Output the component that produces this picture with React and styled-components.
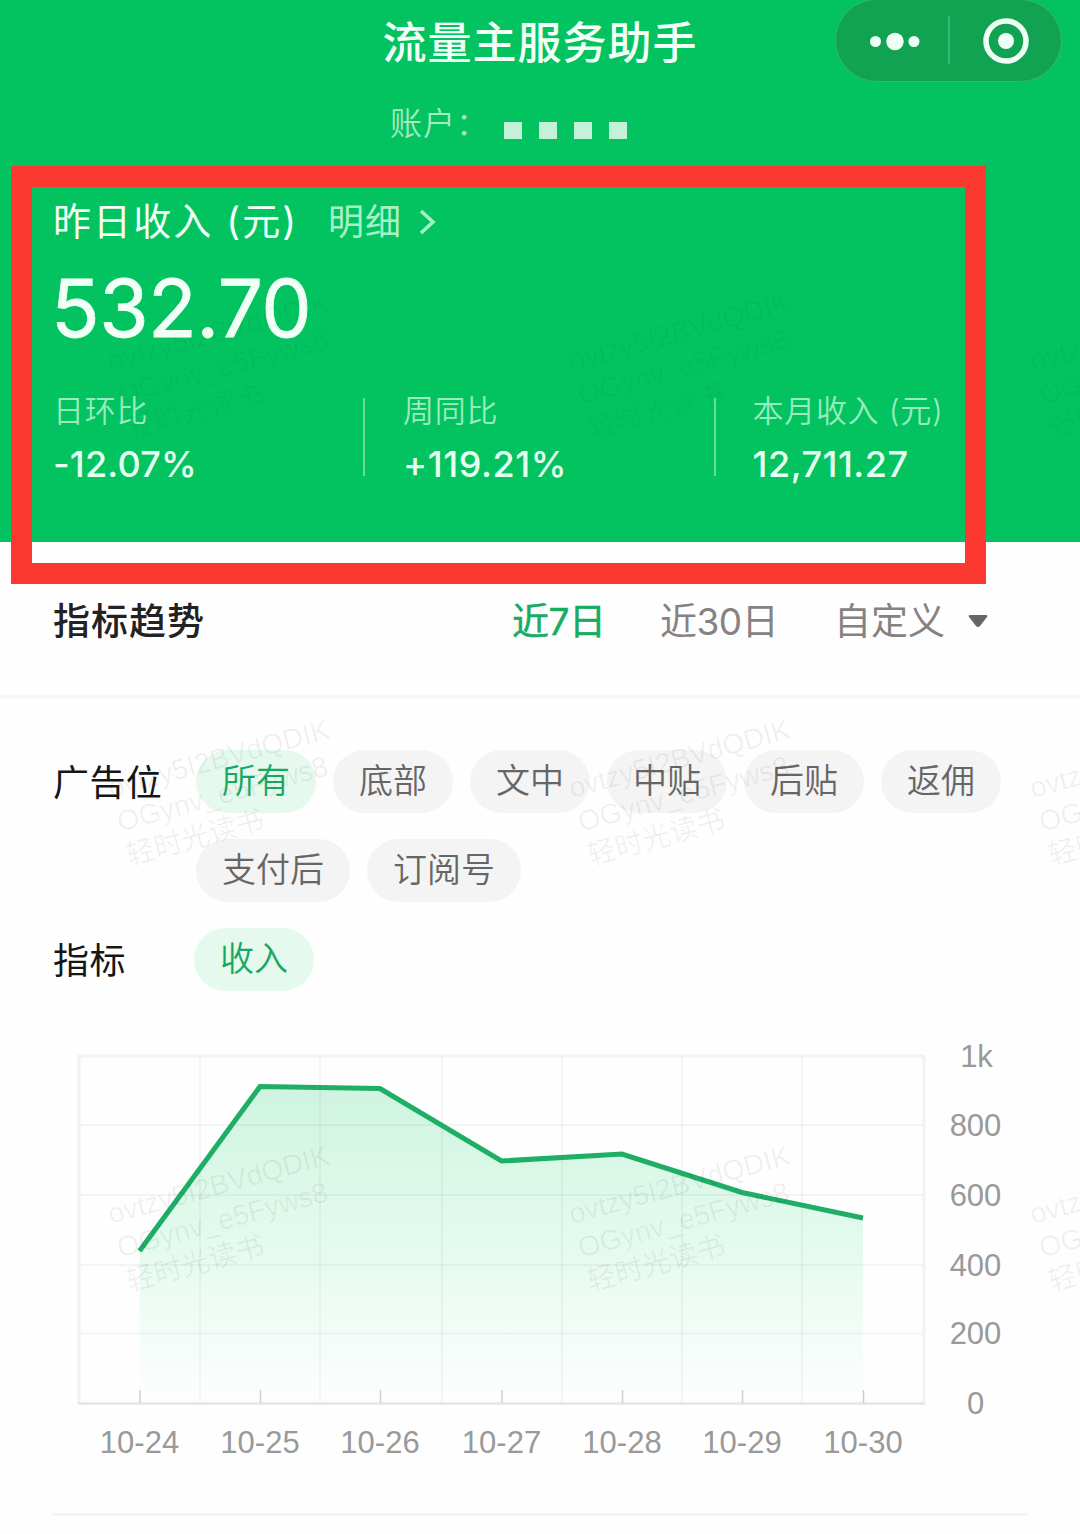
import React from "react";
import styled, { createGlobalStyle } from "styled-components";

const Global = createGlobalStyle`
  * { box-sizing: border-box; }
  body {
    margin: 0;
    background: #fefefe;
    font-family: Inter, "Noto Sans CJK SC", sans-serif;
    white-space: nowrap;
  }
`;

const Page = styled.main`
  position: relative;
  width: 1080px;
  height: 1534px;
  overflow: hidden;
  background: #fefefe;
`;

const Header = styled.header`
  height: 542px;
  background: #02c35f;
  color: #f1fff7;
`;

const TitleBar = styled.div`
  display: grid;
  grid-template-columns: 1fr auto 1fr;
  align-items: center;
  height: 82px;
`;

const Title = styled.h1`
  grid-column: 2;
  margin: 0;
  font-size: 44px;
  line-height: 60px;
  font-weight: 500;
  letter-spacing: 1px;
  padding-top: 4px;
`;

const Capsule = styled.div`
  display: flex;
  align-items: center;
  justify-self: end;
  width: 227px;
  height: 83px;
  margin: -1px 18px 0 0;
  border: 1px solid #35b870;
  border-radius: 42px;
  background: #12a352;
`;

const Account = styled.div`
  display: flex;
  align-items: center;
  height: 84px;
  padding-left: 390px;
`;

const AccountLabel = styled.span`
  width: 114px;
  font-size: 32px;
  line-height: 40px;
  font-weight: 350;
  letter-spacing: 1px;
  color: #a3ebc4;
`;

const Mask = styled.div`
  display: flex;
  gap: 17px;
  padding-top: 13px;
`;

const MaskDot = styled.i`
  width: 18px;
  height: 17px;
  background: #c3f2d8;
`;

const Summary = styled.section`
  display: flex;
  flex-direction: column;
  padding: 31px 0 0 53px;
`;

const Heading = styled.div`
  display: flex;
  align-items: center;
  height: 48px;
  font-size: 38px;
  line-height: 48px;
  font-weight: 400;
  letter-spacing: 2.1px;
`;

const HeadingText = styled.span`
  width: 275px;
`;

const Detail = styled.span`
  display: flex;
  align-items: center;
  gap: 16px;
  padding-top: 2px;
  font-size: 36px;
  font-weight: 400;
  letter-spacing: 1px;
  color: #a5f2c8;
`;

const Amount = styled.div`
  height: 100px;
  margin: 13px 0 0 -2px;
  font-size: 80px;
  line-height: 100px;
  font-weight: 400;
  letter-spacing: -0.5px;
  -webkit-text-stroke: 0.8px currentColor;
`;

const Stats = styled.div`
  display: flex;
  height: 78px;
  margin-top: 40px;
`;

const Stat = styled.div`
  display: flex;
  flex-direction: column;
  gap: 14px;
  width: ${(p) => p.$width}px;
  padding-left: ${(p) => p.$pad || 0}px;
  border-left: ${(p) => (p.$pad ? "2px solid #66dd9c" : "0")};
`;

const StatLabel = styled.span`
  font-size: 31px;
  line-height: 26px;
  font-weight: 350;
  letter-spacing: 0.7px;
  color: #98ecbf;
`;

const StatValue = styled.span`
  font-size: 36px;
  line-height: 52px;
  font-weight: 500;
  letter-spacing: ${(p) => p.$tracking}px;
  color: #e5fff0;
`;

const TrendBar = styled.section`
  display: flex;
  align-items: center;
  height: 156px;
  padding: 6px 0 0 53px;
  border-bottom: 3px solid #f7f7f7;
  font-size: 37px;
  line-height: 50px;
`;

const TrendTitle = styled.h2`
  width: 459px;
  margin: 0;
  font-size: 37px;
  font-weight: 500;
  letter-spacing: 1px;
  color: #222;
`;

const Range = styled.span`
  width: ${(p) => p.$width}px;
  font-weight: 400;
  letter-spacing: ${(p) => p.$tracking || 0}px;
  color: ${(p) => (p.$active ? "#18ab63" : "#868282")};
  -webkit-text-stroke: ${(p) => (p.$active ? "0.5px currentColor" : "0")};
`;

const Filters = styled.section`
  display: flex;
  flex-direction: column;
  gap: 26px;
  padding: 52px 0 0 53px;
`;

const FilterRow = styled.div`
  display: flex;
`;

const FilterLabel = styled.span`
  width: ${(p) => p.$width}px;
  height: 63px;
  font-size: 36px;
  line-height: 66px;
  letter-spacing: 0.4px;
  color: #161616;
`;

const Pills = styled.div`
  display: flex;
  flex-wrap: wrap;
  gap: 26px 17px;
  width: 850px;
`;

const Pill = styled.span`
  width: ${(p) => (p.$wide ? 154 : 120)}px;
  height: 63px;
  border-radius: 32px;
  text-align: center;
  font-size: 34px;
  line-height: 61px;
  font-weight: 350;
  background: ${(p) => (p.$active ? "#e5f9ee" : "#f4f4f4")};
  color: ${(p) => (p.$active ? "#17a862" : "#666")};
`;

const Chart = styled.svg`
  display: block;
  margin-top: 29px;
`;

const AxisText = styled.text`
  font: 31px "Liberation Sans", sans-serif;
  fill: #999;
  text-anchor: middle;
`;

const Rule = styled.hr`
  width: 974px;
  height: 3px;
  margin: 23px 0 0 53px;
  border: 0;
  background: #f5f5f5;
`;

const Highlight = styled.div`
  position: absolute;
  left: 11px;
  top: 166px;
  width: 975px;
  height: 418px;
  border: 21px solid #fb3931;
`;

const Watermark = styled.div`
  position: absolute;
  left: ${(p) => p.$x}px;
  top: ${(p) => p.$y}px;
  transform: rotate(-15.3deg);
  transform-origin: 0 0;
  font: 28.3px/35px "Liberation Sans", "Noto Sans CJK SC", sans-serif;
  color: rgba(0, 0, 0, ${(p) => (p.$faint ? 0.03 : 0.06)});
  pointer-events: none;
`;

const points = [
  ["10-24", 139.5, 1251],
  ["10-25", 260, 1086.5],
  ["10-26", 380, 1088.5],
  ["10-27", 501.5, 1161],
  ["10-28", 622, 1154],
  ["10-29", 742, 1192.5],
  ["10-30", 863, 1218],
];
const line = points.map(([, x, y]) => `${x},${y}`).join(" ");
const columns = [200, 320, 442, 562, 682, 802];
const rows = [
  ["1k", 1056],
  ["800", 1125],
  ["600", 1195],
  ["400", 1265],
  ["200", 1333.5],
  ["0", 1403.5],
];

function TrendChart() {
  return (
    <Chart width="1080" height="470" viewBox="0 1020 1080 470">
      <defs>
        <linearGradient id="area" x1="0" y1="0" x2="0" y2="1">
          <stop offset="0" stopColor="#14c969" stopOpacity="0.2" />
          <stop offset="0.5" stopColor="#1ade78" stopOpacity="0.115" />
          <stop offset="1" stopColor="#1ade78" stopOpacity="0" />
        </linearGradient>
      </defs>
      <polygon points={`139.5,1403 ${line} 863,1403`} fill="url(#area)" />
      <g stroke="#000" strokeOpacity="0.04" strokeWidth="2">
        {columns.map((x) => <line key={x} x1={x} x2={x} y1="1056" y2="1403" />)}
        {rows.slice(1, 5).map(([t, y]) => <line key={t} x1="79" x2="924" y1={y} y2={y} />)}
      </g>
      <path d="M79 1404V1056H924V1404" fill="none" stroke="#f2f2f2" strokeWidth="3" />
      <path d="M78 1403.5H925" stroke="#e4e4e4" strokeWidth="2.5" />
      {points.map(([t, x]) => (
        <line key={t} x1={x + 0.5} x2={x + 0.5} y1="1390" y2="1403" stroke="#cfcfcf" strokeWidth="1.5" />
      ))}
      <polyline points={line} fill="none" stroke="#1eae66" strokeWidth="5" />
      {rows.map(([t, y]) => <AxisText key={t} x={t === "1k" ? 976.5 : 975.5} y={y + 10.5}>{t}</AxisText>)}
      {points.map(([t, x]) => <AxisText key={t} x={x} y="1452.5">{t}</AxisText>)}
    </Chart>
  );
}

export default function App() {
  return (
    <Page>
      <Global />
      <Header>
        <TitleBar>
          <Title>流量主服务助手</Title>
          <Capsule>
            <svg width="225" height="81" viewBox="836 0 225 81" fill="#effff6">
              <circle cx="875.5" cy="41.5" r="5.5" />
              <circle cx="895" cy="41.5" r="8.7" />
              <circle cx="914" cy="41.5" r="5.5" />
              <rect x="948" y="16" width="2" height="48" fill="#35b870" />
              <circle cx="1006" cy="41" r="20" fill="none" stroke="#effff6" strokeWidth="5.5" />
              <circle cx="1006" cy="41" r="8" />
            </svg>
          </Capsule>
        </TitleBar>
        <Account>
          <AccountLabel>账户：</AccountLabel>
          <Mask><MaskDot /><MaskDot /><MaskDot /><MaskDot /></Mask>
        </Account>
        <Summary>
          <Heading>
            <HeadingText>昨日收入 (元)</HeadingText>
            <Detail>
              明细
              <svg width="20" height="28" viewBox="0 0 20 28" fill="none" stroke="#a5f2c8" strokeWidth="3.5">
                <path d="M3 3L15 14L3 25" />
              </svg>
            </Detail>
          </Heading>
          <Amount>532.70</Amount>
          <Stats>
            <Stat $width={310}>
              <StatLabel>日环比</StatLabel>
              <StatValue $tracking={0.2}>-12.07%</StatValue>
            </Stat>
            <Stat $width={350.5} $pad={38}>
              <StatLabel>周同比</StatLabel>
              <StatValue $tracking={0.6}>+119.21%</StatValue>
            </Stat>
            <Stat $width={260} $pad={37}>
              <StatLabel>本月收入 (元)</StatLabel>
              <StatValue $tracking={0.5}>12,711.27</StatValue>
            </Stat>
          </Stats>
        </Summary>
      </Header>
      <TrendBar>
        <TrendTitle>指标趋势</TrendTitle>
        <Range $width={148} $tracking={-0.5} $active>近7日</Range>
        <Range $width={174} $tracking={-0.5}>近30日</Range>
        <Range $width={134}>自定义</Range>
        <svg width="20" height="14" viewBox="0 0 20 14" fill="#666"><path d="M2 0H18Q20 0 19 2L12 11Q10 13 8 11L1 2Q0 0 2 0Z" /></svg>
      </TrendBar>
      <Filters>
        <FilterRow>
          <FilterLabel $width={143}>广告位</FilterLabel>
          <Pills>
            <Pill $active>所有</Pill>
            {["底部", "文中", "中贴", "后贴", "返佣", "支付后", "订阅号"].map((t) => (
              <Pill key={t} $wide={t.length > 2}>{t}</Pill>
            ))}
          </Pills>
        </FilterRow>
        <FilterRow>
          <FilterLabel $width={141}>指标</FilterLabel>
          <Pill $active>收入</Pill>
        </FilterRow>
      </Filters>
      <TrendChart />
      <Rule />
      {[345, 772, 1198].map((y) =>
        [104, 565, 1026].map((x) => (
          <Watermark key={`${x}-${y}`} $x={x} $y={y} $faint={y < 500}>
            ovtzy5I2BVdQDIK<br />OGynv_e5Fyws8<br />轻时光读书
          </Watermark>
        ))
      )}
      <Highlight />
    </Page>
  );
}
